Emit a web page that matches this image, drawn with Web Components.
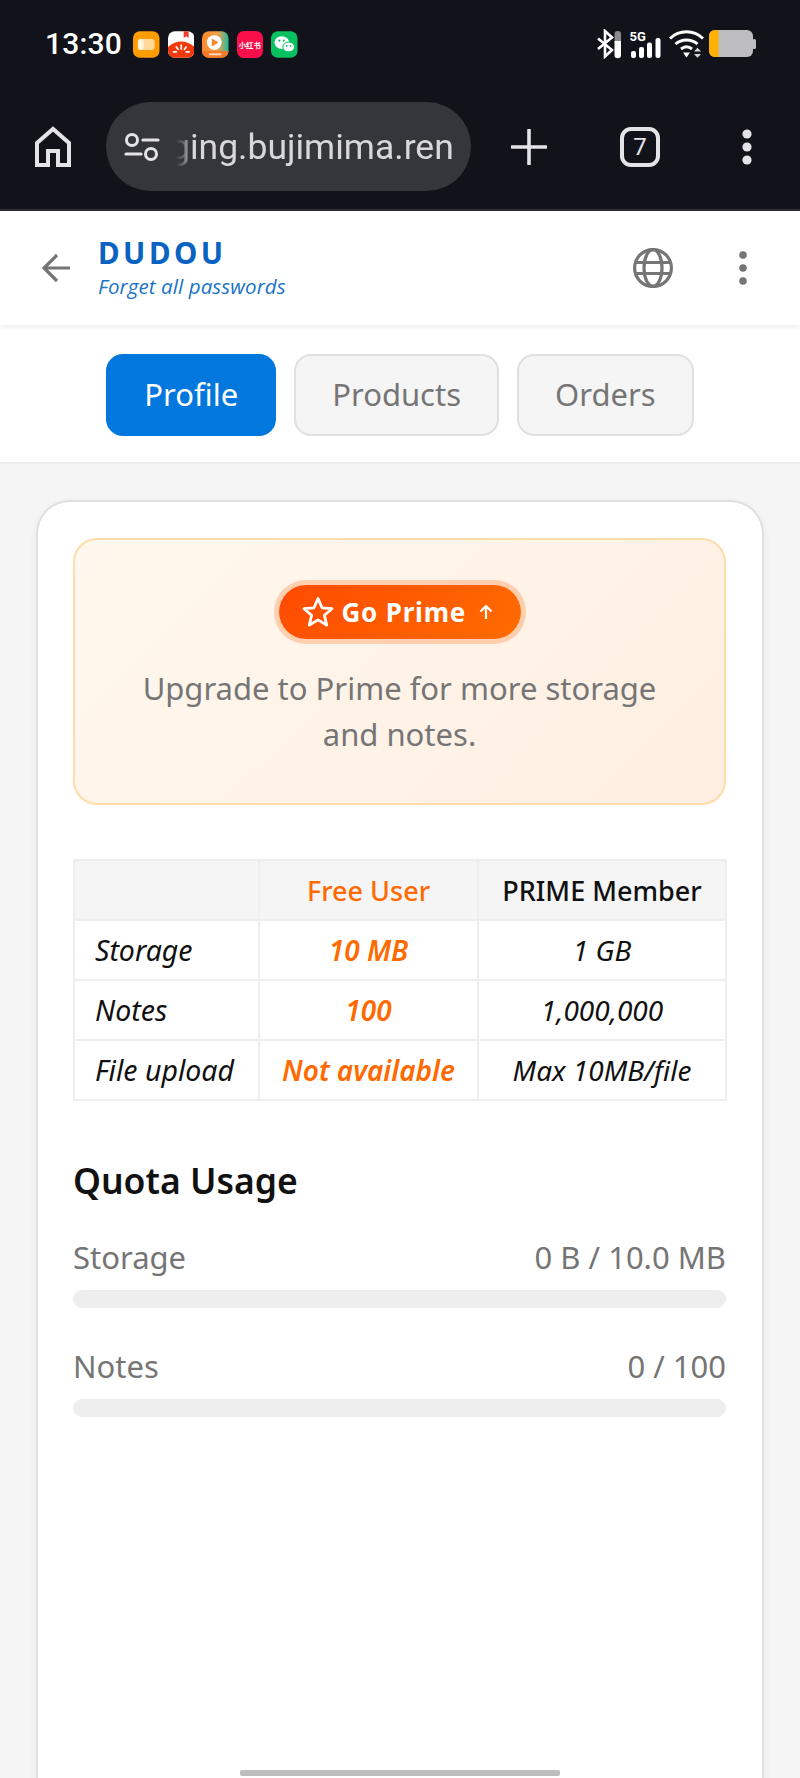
<!DOCTYPE html>
<html lang="en"><head><meta charset="utf-8"><title>DUDOU</title>
<style>
html,body{margin:0;padding:0;background:#f5f5f5;height:1778px;overflow:hidden;font-family:"Noto Sans",sans-serif}
</style></head><body>
<phone-shell>
  <status-bar></status-bar>
  <browser-bar></browser-bar>
  <app-header></app-header>
  <tab-nav>
    <tab-btn active>Profile</tab-btn>
    <tab-btn style="margin-left:18px">Products</tab-btn>
    <tab-btn style="margin-left:18px">Orders</tab-btn>
  </tab-nav>
  <app-card>
    <prime-banner></prime-banner>
    <compare-table></compare-table>
    <quota-usage>
      <quota-row label="Storage" value="0 B / 10.0 MB"></quota-row>
      <quota-row label="Notes" value="0 / 100"></quota-row>
    </quota-usage>
  </app-card>
</phone-shell>
<script>
function def(name, html, init){
  customElements.define(name, class extends HTMLElement{
    constructor(){super();this.attachShadow({mode:'open'}).innerHTML=html;}
    connectedCallback(){ if(init) init(this); }
  });
}
def('phone-shell',`<style>
:host{display:block;position:relative;width:800px;height:1778px;overflow:hidden;background:#f5f5f5}
.home{position:absolute;left:240px;bottom:2px;width:320px;height:6px;border-radius:2px;background:#bdbdbd}
</style><slot></slot><div class="home"></div>`);

def('status-bar',`<style>
:host{display:flex;align-items:center;height:90px;padding:0 40px 2px 45px;box-sizing:border-box;background:#12131a;color:#fff}
.time{font:500 30px/1 Roboto,sans-serif;letter-spacing:.2px;width:88px}
.apps{display:flex;gap:8px}
.apps svg,.apps .xhs{width:26.5px;height:27px;display:block}
.xhs{border-radius:7px;background:#fa0f4b;color:#fff;font:700 7.4px/27px "Noto Sans CJK SC",sans-serif;text-align:center;white-space:nowrap;overflow:hidden}
.right{margin-left:auto;display:flex;align-items:center}
</style>
<div class="time">13:30</div>
<div class="apps">
<svg viewBox="0 0 27 27"><rect width="27" height="27" rx="7" fill="#ff9d00"/><rect x="5" y="8" width="17" height="11" rx="3" fill="#ffd89a"/><rect x="5" y="8" width="6" height="11" rx="2.500" fill="#fff3dc"/></svg>
<svg viewBox="0 0 27 27"><rect width="27" height="27" rx="7" fill="#fff"/><path d="M0 16Q13.500 5 27 16V20a7 7 0 0 1-7 7H7a7 7 0 0 1-7-7Z" fill="#f03a0e"/><path d="M16 0h5v7l-2.500-2L16 7Z" fill="#f0402a"/><path d="M13.500 14v4M8.500 16l1.800 2.500M18.500 16l-1.800 2.500M5.500 21h3M18.500 21h3" stroke="#fff" stroke-width="1.700" stroke-linecap="round"/></svg>
<svg viewBox="0 0 27 27"><defs><linearGradient id="g" x1="0" y1="0" x2="1" y2="0"><stop offset="0" stop-color="#f98a2d"/><stop offset=".6" stop-color="#f3a04a"/><stop offset="1" stop-color="#1dbd9c"/></linearGradient></defs><rect width="27" height="27" rx="7" fill="url(#g)"/><path d="M0 20h27v0a7 7 0 0 1-7 7H7a7 7 0 0 1-7-7Z" fill="#f47a2a"/><circle cx="12.500" cy="11.500" r="7.500" fill="#fff"/><path d="M10 7.500l7 4-7 4Z" fill="#f58a30"/><rect x="7" y="22.500" width="13" height="2" rx="1" fill="#ffd9b5"/></svg>
<div class="xhs">小红书</div>
<svg viewBox="0 0 27 27"><rect width="27" height="27" rx="7" fill="#07c160"/><ellipse cx="11" cy="11.500" rx="7.500" ry="6.500" fill="#fff"/><ellipse cx="18" cy="16" rx="6" ry="5" fill="#fff" stroke="#07c160" stroke-width="1"/><circle cx="8.500" cy="9.500" r="1.100" fill="#07c160"/><circle cx="13" cy="9.500" r="1.100" fill="#07c160"/><circle cx="16" cy="15" r=".9" fill="#07c160"/><circle cx="20" cy="15" r=".9" fill="#07c160"/></svg>
</div>
<div class="right">
<svg width="165" height="30" viewBox="-5 0 165 30">
<g transform="translate(-4 0)">
<path d="M2 9.500L16 21l-7 6.500V2l7 6.500L2 20" fill="none" stroke="#fff" stroke-width="2.600"/>
<rect x="18.500" y="2" width="6.500" height="12" rx="3" fill="#8a8a8a"/><path d="M18.500 12h6.500v14a3.200 3.200 0 0 1-6.500 0Z" fill="#fff"/>
<text x="33.500" y="11.500" fill="#fff" font-family="Roboto,sans-serif" font-weight="700" font-size="13">5G</text>
<rect x="35" y="22" width="5" height="7" rx="2" fill="#fff"/><rect x="43" y="18" width="5" height="11" rx="2" fill="#fff"/><rect x="51" y="13.500" width="5" height="15.500" rx="2" fill="#fff"/><rect x="59.500" y="9" width="5" height="20" rx="2" fill="#fff"/>
</g>
<path d="M70 9.500C79.500 .5 93.500 .5 103 9.500M75.500 15c6-5.500 16-5.500 22 0M81 20c3.500-2.800 7.500-2.800 11 0" fill="none" stroke="#fff" stroke-width="3"/>
<path d="M83 23.500h7l-3.500 5Z" fill="#fff"/><path d="M94 22.500l3.500-3.800 3.500 3.800ZM94 25l3.500 3.800 3.500-3.800Z" fill="#d8d8d8"/>
<rect x="109" y="1" width="44" height="27" rx="6" fill="#bdbdbf"/><path d="M115 1h3.500v27H115a6 6 0 0 1-6-6V7a6 6 0 0 1 6-6Z" fill="#ffb000"/><rect x="152.500" y="10" width="3.500" height="10" rx="1.500" fill="#bdbdbf"/>
</svg></div>`);

def('browser-bar',`<style>
:host{display:flex;align-items:center;height:121px;padding:0 0 6px;box-sizing:border-box;background:#12131a;border-bottom:2px solid #2a2b36;position:relative;color:#e3e3e8}
svg{display:block;flex:none}
.home{margin-left:34px}
.pill{margin-left:34px;width:365px;height:89px;border-radius:45px;background:#35353c;display:flex;align-items:center;box-sizing:border-box;padding-left:18px}
.url{font:400 35.5px/46px Roboto,sans-serif;margin-left:10px;white-space:nowrap;color:#d8d8dc;-webkit-mask-image:linear-gradient(90deg,transparent 6px,rgba(0,0,0,.35) 14px,#000 22px);mask-image:linear-gradient(90deg,transparent 6px,rgba(0,0,0,.35) 14px,#000 22px)}
.plus{margin-left:40px}
.tab{margin-left:73px;width:40px;height:40px;box-sizing:border-box;border:4px solid #e3e3e8;border-radius:11px;font:400 24px/32px Roboto,sans-serif;text-align:center}
.dots{margin-left:82px}
</style>
<svg class="home" width="38" height="42" viewBox="0 0 38 42"><path d="M3 39V17L19 3l16 14v22H24V25H14v14Z" fill="none" stroke="#e3e3e8" stroke-width="4" stroke-linejoin="miter"/></svg>
<div class="pill">
<svg width="36" height="28" viewBox="0 0 36 28"><circle cx="8" cy="7" r="5.500" fill="none" stroke="#e3e3e8" stroke-width="3"/><path d="M19 7h15M2 21h15" stroke="#e3e3e8" stroke-width="3.200" stroke-linecap="round"/><circle cx="27" cy="21" r="5.500" fill="none" stroke="#e3e3e8" stroke-width="3"/></svg>
<div class="url">ging.bujimima.ren</div>
</div>
<svg class="plus" width="36" height="36" viewBox="0 0 36 36"><path d="M18 1v34M1 18h34" stroke="#e3e3e8" stroke-width="3.600" stroke-linecap="round"/></svg>
<div class="tab">7</div>
<svg class="dots" width="10" height="36" viewBox="0 0 10 36"><circle cx="5" cy="5" r="4.600" fill="#e3e3e8"/><circle cx="5" cy="18" r="4.600" fill="#e3e3e8"/><circle cx="5" cy="31" r="4.600" fill="#e3e3e8"/></svg>`);

def('app-header',`<style>
:host{display:flex;align-items:center;height:114px;box-sizing:border-box;background:#fff;box-shadow:0 2px 4px rgba(0,0,0,.08);position:relative;z-index:1}
svg{display:block;flex:none}
.back{margin-left:42px}
.brand{margin-left:26px;padding-bottom:5px;display:flex;flex-direction:column}
.name{font:700 29.5px/34px "Noto Sans",sans-serif;letter-spacing:3.5px;color:#0a63c0}
.tag{font:italic 400 20.5px/20px "Open Sans",sans-serif;color:#1a73c4;letter-spacing:.1px;margin-top:6px;white-space:nowrap}
.globe{margin-left:auto}
.dots{margin-left:65px;margin-right:53px}
</style>
<svg class="back" width="30" height="30" viewBox="0 0 30 30"><path d="M15 2L2 15l13 13M2 15h26" fill="none" stroke="#757575" stroke-width="3.200"/></svg>
<div class="brand"><div class="name">DUDOU</div><div class="tag">Forget all passwords</div></div>
<svg class="globe" width="42" height="42" viewBox="0 0 42 42"><g fill="none" stroke="#757575" stroke-width="3.200"><circle cx="21" cy="21" r="18.400"/><ellipse cx="21" cy="21" rx="9" ry="18.400"/><path d="M3 15.500h36M3 26.500h36"/></g></svg>
<svg class="dots" width="8" height="34" viewBox="0 0 8 34"><circle cx="4" cy="4" r="3.800" fill="#757575"/><circle cx="4" cy="17" r="3.800" fill="#757575"/><circle cx="4" cy="30" r="3.800" fill="#757575"/></svg>`);

def('tab-nav',`<style>
:host{display:flex;justify-content:center;align-items:center;height:139px;padding-top:2px;box-sizing:border-box;background:#fff;border-bottom:2px solid #eee}
</style><slot></slot>`);

def('tab-btn',`<style>
:host{display:flex;align-items:center;justify-content:center;height:82px;box-sizing:border-box;padding:0 36px;border-radius:17px;border:2px solid #e0e0e0;background:#f5f5f5;color:#757575;font:400 31px/1 "Noto Sans",sans-serif}
:host([active]){background:#0277dd;border-color:#0277dd;color:#fff}
</style><slot></slot>`);

def('app-card',`<style>
:host{display:flex;flex-direction:column;margin:36px 36px 0;padding:36px 36px 0 35px;height:1400px;box-sizing:border-box;background:#fff;border:2px solid #e0e0e0;border-radius:34px;box-shadow:0 3px 8px rgba(0,0,0,.06)}
</style><slot></slot>`);

def('prime-banner',`<style>
:host{display:flex;flex-direction:column;align-items:center;height:267px;box-sizing:border-box;padding-top:45px;border:2px solid #ffdca8;border-radius:24px;background:linear-gradient(135deg,#fff8ee,#ffeee1)}
.btn{display:flex;align-items:center;height:54px;width:242px;box-sizing:border-box;padding-left:23px;border-radius:27px;background:linear-gradient(135deg,#ff4a00,#ff6c00);box-shadow:0 0 0 5px rgba(255,122,40,.3);color:#fff;font:700 26px/1 "Noto Sans",sans-serif;letter-spacing:.8px}
.lbl{margin-left:8px}
.up{margin-left:12px}
p{margin:26px 0 0;width:560px;text-align:center;color:#757575;font:400 31px/46px "Noto Sans",sans-serif}
svg{display:block;flex:none}
</style>
<div class="btn">
<svg width="32" height="32" viewBox="0 0 32 32"><path d="M16 2.500l4 9.300 10 .9-7.600 6.600 2.300 9.800L16 23.900l-8.700 5.200 2.300-9.800L2 12.700l10-.9Z" fill="none" stroke="#fff" stroke-width="2.800" stroke-linejoin="round"/></svg>
<span class="lbl">Go Prime</span>
<svg class="up" width="16" height="18" viewBox="0 0 16 18"><path d="M8 16V3M2.500 8.500L8 3l5.500 5.500" fill="none" stroke="#fff" stroke-width="2.200"/></svg>
</div>
<p>Upgrade to Prime for more storage and notes.</p>`);

def('compare-table',`<style>
:host{display:block;margin-top:54px}
table{border-collapse:collapse;width:652px;table-layout:fixed;font:italic 400 28px/1 "Noto Sans",sans-serif;color:#111}
td,th{border:2px solid #eee;height:60px;padding:0;text-align:center;box-sizing:border-box;white-space:nowrap}
th{font-size:27px;font-style:normal;font-weight:500;background:#f5f5f5}
td:first-child{text-align:left;padding-left:20px;font-size:28.500px}
.f{color:#ff6a00;font-weight:600}
th.f{font-weight:500}
</style>
<table><colgroup><col style="width:185px"><col style="width:219px"><col style="width:248px"></colgroup>
<tr><th></th><th class="f">Free User</th><th>PRIME Member</th></tr>
<tr><td>Storage</td><td class="f">10 MB</td><td>1 GB</td></tr>
<tr><td>Notes</td><td class="f">100</td><td>1,000,000</td></tr>
<tr><td>File upload</td><td class="f">Not available</td><td>Max 10MB/file</td></tr>
</table>`);

def('quota-usage',`<style>
:host{display:block;margin-top:54px}
h2{margin:0 0 29px;font:600 35.500px/50px "Noto Sans",sans-serif;color:#111}
::slotted(quota-row){margin-bottom:35px}
</style><h2>Quota Usage</h2><slot></slot>`);

def('quota-row',`<style>
:host{display:block}
.r{display:flex;justify-content:space-between;color:#757575;font:400 31px/46px "Noto Sans",sans-serif}
.b{height:18px;margin-top:10px;border-radius:9px;background:#eee}
</style><div class="r"><span id="l"></span><span id="v"></span></div><div class="b"></div>`,
el=>{el.shadowRoot.getElementById('l').textContent=el.getAttribute('label');el.shadowRoot.getElementById('v').textContent=el.getAttribute('value');});
</script>
</body></html>
